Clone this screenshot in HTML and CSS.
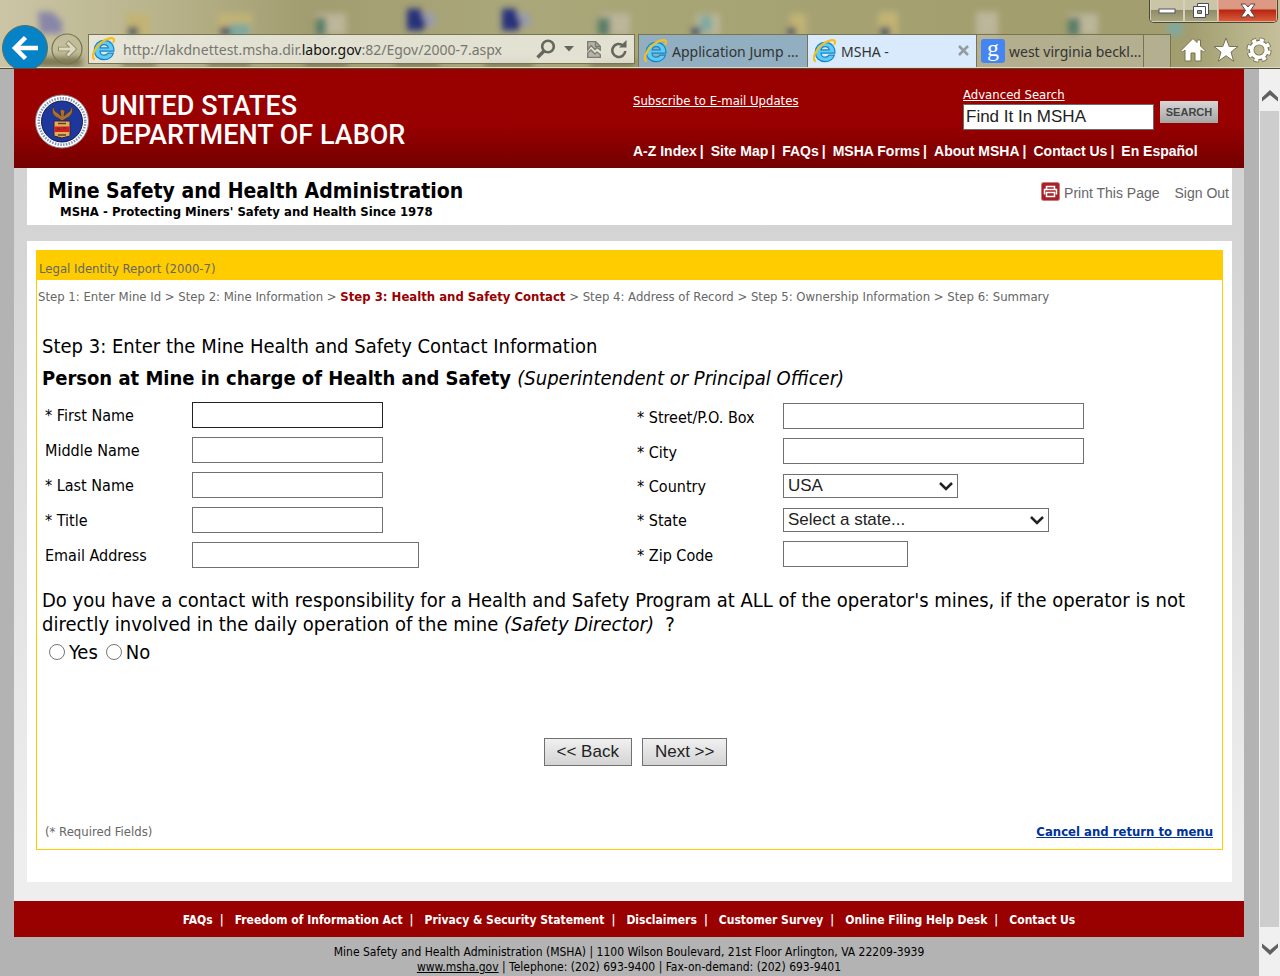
FILE: index.html
```
<!DOCTYPE html>
<html lang="en">
<head>
    <meta charset="UTF-8">
    <meta name="viewport" content="width=device-width, initial-scale=1.0">
    <title>MSHA - Legal Identity Report (2000-7)</title>
    <link rel="stylesheet" href="styles.css">
</head>
<body>
    <!-- shared icons -->
    <svg width="0" height="0" class="defs" aria-hidden="true">
        <symbol id="ie" viewBox="2 1 21 22">
            <path d="M21.500 14H8.800c.2 2.200 1.600 3.600 3.900 3.600 1.600 0 2.800-.6 3.500-1.800h4.900c-1.200 3.800-4.400 5.900-8.500 5.900-5.300 0-9-3.500-9-8.700s3.700-8.900 9-8.900c5.700 0 9.400 4 8.900 9.900zM8.900 11h7.500c-.2-1.800-1.500-3.100-3.700-3.100-2.100 0-3.500 1.200-3.800 3.100z" fill="#5cccf6" stroke="#1b83c4" stroke-width="1.100"/>
            <path d="M4 21.500C0 20 3.500 11.500 9.500 6.500 15 2 21 .8 21.700 3.300c.2 1-.2 2-.9 3" fill="none" stroke="#f7bf1a" stroke-width="2"/>
        </symbol>
    </svg>

    <div class="browser">
        <svg class="desktop" viewBox="0 0 1280 69" preserveAspectRatio="none" aria-hidden="true">
            <defs>
                <linearGradient id="glass" x1="0" x2="1">
                    <stop offset="0" stop-color="#cbc5a6"/>
                    <stop offset=".12" stop-color="#b9b48c"/>
                    <stop offset=".24" stop-color="#a29d70"/>
                    <stop offset=".4" stop-color="#aaa77a"/>
                    <stop offset=".8" stop-color="#a29e6d"/>
                    <stop offset=".93" stop-color="#a29e70"/>
                    <stop offset="1" stop-color="#c5c09b"/>
                </linearGradient>
                <filter id="soft" x="-10%" y="-50%" width="120%" height="200%"><feGaussianBlur stdDeviation="3"/></filter>
            </defs>
            <rect width="1280" height="69" fill="url(#glass)"/>
            <g filter="url(#soft)">
                <path d="M38 12h14l10 10v12H40z" fill="#8886a8"/>
                <path d="M407 9h14l6 14-4 8h-16zM502 9h14l6 14-4 8h-16z" fill="#25307c"/>
                <path d="M421 13h12l4 10-8 6zM516 13h12l4 10-8 6z" fill="#9a9cae"/>
                <path d="M126 14h24v24h-24zM218 14h34v24h-34zM790 14h16v24h-16zM878 12h20v24h-20z" fill="#c2b374"/>
                <path d="M316 14h30v22h-30zM600 14h30v22h-30zM696 14h24v22h-24zM976 12h22v26h-22zM1068 14h30v22h-30z" fill="#bcb69a"/>
                <path d="M316 18h10v18h-10zM598 18h12v18h-12zM1068 18h12v18h-12z" fill="#587d68"/>
                <path d="M700 16h12v16h-12zM230 24h20v14h-20zM1168 22h14v14h-14z" fill="#7fa99f"/>
                <path d="M128 28h10v8h-10zM220 28h10v8h-10zM880 28h10v8h-10zM692 28h8v8h-8zM788 28h8v8h-8z" fill="#344a68"/>
                <path d="M36 58h46v10H36zM122 60h34v7h-34zM208 60h42v7h-42zM305 60h42v7h-42zM395 60h44v7h-44zM485 60h48v7h-48zM590 60h45v7h-45z" fill="#77724d"/>
            </g>
        </svg>

        <div class="window-buttons">
            <button type="button" aria-label="Minimize"><svg width="18" height="6" viewBox="0 0 18 6"><rect x="1" y="1" width="16" height="4" fill="#fff" stroke="#555660"/></svg></button>
            <button type="button" aria-label="Restore"><svg width="18" height="17" viewBox="0 0 18 17"><path d="M5.500 1.500h11v11h-11z" fill="#fff" stroke="#4b4c5c"/><path d="M1.500 4.500h12v11h-12z" fill="#fff" stroke="#4b4c5c"/><path d="M5.500 8.500h4v3h-4z" fill="#a29e70" stroke="#4b4c5c"/></svg></button>
            <button type="button" class="close" aria-label="Close"><svg width="16" height="15" viewBox="0 0 16 15"><path d="M1 1h4.500L8 4l2.500-3H15l-4.500 6.500L15 14h-4.500L8 11l-2.500 3H1l4.500-6.500z" fill="#fff" stroke="#5a4550"/></svg></button>
        </div>

        <div class="toolbar">
            <button type="button" class="back" aria-label="Back"><svg width="46" height="46" viewBox="0 0 46 46"><circle cx="23" cy="23" r="22.500" fill="#0583c6" stroke="#55705f"/><path d="M36 23H14M23.500 12.500L13 23l10.500 10.500" fill="none" stroke="#fff" stroke-width="4.500"/></svg></button>
            <button type="button" class="forward" aria-label="Forward"><svg width="32" height="32" viewBox="0 0 32 32"><circle cx="16" cy="16" r="15" fill="none" stroke="#77744f" stroke-width="1.200"/><path d="M7 16h16M16 9l7 7-7 7" fill="none" stroke="#8a8763" stroke-width="4.600"/><path d="M8 16h15M16.500 9.500L23 16l-6.500 6.500" fill="none" stroke="#dedac2" stroke-width="3"/></svg></button>
            <div class="address">
                <svg width="24" height="24"><use href="#ie"/></svg>
                <span class="url">http://lakdnettest.msha.dir.<b>labor.gov</b>:82/Egov/2000-7.aspx</span>
                <svg width="20" height="20" viewBox="0 0 20 20"><circle cx="12" cy="7.500" r="5.800" fill="none" stroke="#66665c" stroke-width="2.600"/><path d="M8 12l-6.500 6.500" stroke="#66665c" stroke-width="3.400"/></svg>
                <svg class="caret" width="10" height="6" viewBox="0 0 10 6"><path d="M0 0h10L5 5.500z" fill="#66665c"/></svg>
                <svg class="broken" width="14" height="17" viewBox="0 0 14 17"><path d="M.7 9V.7h8l4.600 4.600V9L10 6.500l-2 2-4-4z" fill="#b4b4a8" stroke="#7b7b70" stroke-width="1.300"/><path d="M8.500 1v4.500H13" fill="none" stroke="#7b7b70" stroke-width="1.300"/><path d="M.7 12L4 9l4 4 2-2 3.300 2.500v2.800H.7z" fill="#b4b4a8" stroke="#7b7b70" stroke-width="1.300"/></svg>
                <svg width="18" height="19" viewBox="0 0 18 19"><path d="M13 5.500A6.500 6.500 0 1 0 15.300 11" fill="none" stroke="#66665c" stroke-width="2.600"/><path d="M9 7.500h7.500V0z" fill="#66665c"/></svg>
            </div>
            <div class="tabs">
                <div class="tab tab-blue"><svg width="24" height="24"><use href="#ie"/></svg><span>Application Jump ...</span></div>
                <div class="tab tab-active"><svg width="24" height="24"><use href="#ie"/></svg><span>MSHA -</span><button type="button" aria-label="Close tab"><svg width="11" height="11" viewBox="0 0 11 11"><path d="M1 1l9 9M10 1l-9 9" stroke="#929ba2" stroke-width="2.500"/></svg></button></div>
                <div class="tab tab-last"><span class="google">g</span><span>west virginia beckl...</span></div>
                <div class="tab-new"></div>
            </div>
            <div class="tools">
                <button type="button" aria-label="Home"><svg width="26" height="26" viewBox="0 0 26 26"><path d="M13 1.500l4 4V3h3.500v6L25 13.500l-1.500 1.500-2.500-2v11h-6v-8h-4v8H5V13l-2.500 2L1 13.500z" fill="#fff" stroke="#77744f"/></svg></button>
                <button type="button" aria-label="Favorites"><svg width="26" height="26" viewBox="0 0 26 26"><path d="M13 1l3.200 8.500H25l-7 5.600 2.700 9.200-7.700-5.600-7.700 5.600L8 15.100 1 9.500h8.800z" fill="#fff" stroke="#77744f"/></svg></button>
                <button type="button" aria-label="Tools"><svg width="26" height="26" viewBox="0 0 26 26"><g fill="none"><circle cx="13" cy="13" r="7.500" stroke="#77744f" stroke-width="5.500"/><circle cx="13" cy="13" r="10.200" stroke="#77744f" stroke-width="4.800" stroke-dasharray="5 3.010"/><circle cx="13" cy="13" r="7.300" stroke="#fff" stroke-width="3.600"/><circle cx="13" cy="13" r="10" stroke="#fff" stroke-width="3.400" stroke-dasharray="4 3.854" stroke-dashoffset="-.5"/></g></svg></button>
            </div>
        </div>
    </div>

    <div class="viewport">
        <div class="page">
            <div class="wrapper">
                <header>
                    <a href="#" class="logo">
                        <svg width="54" height="55" viewBox="0 0 54 55" aria-hidden="true">
                            <circle cx="27" cy="27.500" r="26.500" fill="#fff" stroke="#8b7d7d"/>
                            <circle cx="27" cy="27.500" r="23.200" fill="none" stroke="#8591ba" stroke-width="2.600" stroke-dasharray="1.500 1.300"/>
                            <circle cx="27" cy="27.500" r="20.500" fill="#1d379d" stroke="#101b4c"/>
                            <path d="M18 12l2 5 4 3 2 2-1-5 2-2 3 2-1 5 2-2 4-3 2-5c2 6-1 10-5 12l-5 3-4-3c-5-2-7-6-5-12z" fill="#a96f32" stroke="#352b35" stroke-width=".7"/>
                            <path d="M19 27h16v15l-8 2-8-2z" fill="#e2af57" stroke="#32213c"/>
                            <path d="M19.500 32.500h15v5.500h-15z" fill="#cf1d24"/>
                            <path d="M23 29.500h8M22 35h3M28 34h3M23 41h8" stroke="#673b28" stroke-width="1.500"/>
                        </svg>
                        <span>UNITED STATES<br>DEPARTMENT OF LABOR</span>
                    </a>
                    <div class="header-links">
                        <div class="header-top">
                            <a href="#" class="subscribe">Subscribe to E-mail Updates</a>
                            <form class="search">
                                <div>
                                    <a href="#">Advanced Search</a>
                                    <input type="text" aria-label="Search MSHA" value="Find It In MSHA">
                                </div>
                                <button type="button">SEARCH</button>
                            </form>
                        </div>
                        <nav>
                            <a href="#">A-Z Index</a><i>|</i>
                            <a href="#">Site Map</a><i>|</i>
                            <a href="#">FAQs</a><i>|</i>
                            <a href="#">MSHA Forms</a><i>|</i>
                            <a href="#">About MSHA</a><i>|</i>
                            <a href="#">Contact Us</a><i>|</i>
                            <a href="#">En Español</a>
                        </nav>
                    </div>
                </header>

                <div class="title-bar">
                    <div>
                        <h1>Mine Safety and Health Administration</h1>
                        <p>MSHA - Protecting Miners' Safety and Health Since 1978</p>
                    </div>
                    <div class="title-links">
                        <a href="#"><svg width="19" height="19" viewBox="0 0 19 19"><rect x=".5" y=".5" width="18" height="18" rx="2" fill="#a82127" stroke="#c77b7d"/><path d="M5.500 7V4.500h8V7M3.500 12.500v-5h12v5M5.500 10.500h8v4h-8z" fill="none" stroke="#fff" stroke-width="1.500"/></svg>Print This Page</a>
                        <a href="#">Sign Out</a>
                    </div>
                </div>

                <main>
                    <div class="report">
                        <h2>Legal Identity Report (2000-7)</h2>
                        <p class="steps">Step 1: Enter Mine Id &gt; Step 2: Mine Information &gt; <strong>Step 3: Health and Safety Contact</strong> &gt; Step 4: Address of Record &gt; Step 5: Ownership Information &gt; Step 6: Summary</p>

                        <form class="contact-form">
                            <h3>Step 3: Enter the Mine Health and Safety Contact Information</h3>
                            <h4>Person at Mine in charge of Health and Safety <em>(Superintendent or Principal Officer)</em></h4>

                            <div class="fields">
                                <div class="column">
                                    <div class="field"><label for="firstName">* First Name</label><input type="text" id="firstName" class="current"></div>
                                    <div class="field"><label for="middleName">Middle Name</label><input type="text" id="middleName"></div>
                                    <div class="field"><label for="lastName">* Last Name</label><input type="text" id="lastName"></div>
                                    <div class="field"><label for="jobTitle">* Title</label><input type="text" id="jobTitle"></div>
                                    <div class="field"><label for="email">Email Address</label><input type="text" id="email" class="email"></div>
                                </div>
                                <div class="column column-right">
                                    <div class="field"><label for="street">* Street/P.O. Box</label><input type="text" id="street" class="wide"></div>
                                    <div class="field"><label for="city">* City</label><input type="text" id="city" class="wide"></div>
                                    <div class="field"><label for="country">* Country</label><select id="country"><option>USA</option></select></div>
                                    <div class="field"><label for="state">* State</label><select id="state" class="state"><option>Select a state...</option></select></div>
                                    <div class="field"><label for="zip">* Zip Code</label><input type="text" id="zip" class="zip"></div>
                                </div>
                            </div>

                            <p class="question" id="question">Do you have a contact with responsibility for a Health and Safety Program at ALL of the operator's mines, if the operator is not directly involved in the daily operation of the mine <em>(Safety Director)</em> &nbsp;?</p>
                            <div class="answers" role="radiogroup" aria-labelledby="question">
                                <input type="radio" name="director" id="yes"><label for="yes">Yes</label>
                                <input type="radio" name="director" id="no"><label for="no">No</label>
                            </div>

                            <div class="buttons">
                                <button type="button">&lt;&lt; Back</button>
                                <button type="button">Next &gt;&gt;</button>
                            </div>
                        </form>

                        <div class="report-bottom">
                            <span>(* Required Fields)</span>
                            <a href="#">Cancel and return to menu</a>
                        </div>
                    </div>
                </main>

                <footer>
                    <a href="#">FAQs</a><i>|</i>
                    <a href="#">Freedom of Information Act</a><i>|</i>
                    <a href="#">Privacy &amp; Security Statement</a><i>|</i>
                    <a href="#">Disclaimers</a><i>|</i>
                    <a href="#">Customer Survey</a><i>|</i>
                    <a href="#">Online Filing Help Desk</a><i>|</i>
                    <a href="#">Contact Us</a>
                </footer>
            </div>
            <p class="address-line">Mine Safety and Health Administration (MSHA) | 1100 Wilson Boulevard, 21st Floor Arlington, VA 22209-3939<br><a href="#">www.msha.gov</a> | Telephone: (202) 693-9400 | Fax-on-demand: (202) 693-9401</p>
        </div>
        <div class="scrollbar" aria-hidden="true">
            <svg width="16" height="12" viewBox="0 0 16 12"><path d="M0 11.500V7.500L8 0l8 7.500v4L8 5z" fill="#606060"/></svg>
            <div class="thumb"></div>
            <svg width="16" height="12" viewBox="0 0 16 12"><path d="M0 .5v4L8 12l8-7.500v-4L8 7z" fill="#606060"/></svg>
        </div>
    </div>
</body>
</html>
```
FILE: styles.css
```
* {
    box-sizing: border-box;
}
body {
    display: flex;
    flex-direction: column;
    min-height: 100vh;
    margin: 0;
    background-color: #b3b3b3;
    color: #000;
    font-family: Tahoma, "DejaVu Sans Condensed", "Noto Sans", sans-serif;
    font-size: 13px;
}
h1, h2, h3, h4, p {
    margin: 0;
}
button {
    padding: 0;
    border: none;
    background: none;
    cursor: pointer;
}
.defs {
    position: absolute;
}

/* browser frame */
.browser {
    position: relative;
    height: 69px;
    overflow: hidden;
    border-bottom: 1px solid #4f4d38;
    font-family: "Segoe UI", "Noto Sans", sans-serif;
    font-size: 14px;
}
.desktop {
    position: absolute;
    width: 100%;
    height: 100%;
}
.window-buttons {
    position: absolute;
    top: 0;
    right: 2px;
    display: flex;
    height: 23px;
    border: 1px solid #4b4936;
    border-top: none;
    border-radius: 0 0 5px 5px;
    box-shadow: inset 0 0 0 1px #dedbc4;
    overflow: hidden;
}
.window-buttons button {
    display: flex;
    align-items: center;
    justify-content: center;
    width: 34px;
    border: 1px solid #d5d1b8;
    border-width: 0 1px 1px;
    background: linear-gradient(#c9c5a6 45%, #8f8b67 50%, #aaa780);
}
.window-buttons .close {
    width: 59px;
    border-color: #e8a893;
    background: linear-gradient(#dc9a85 40%, #b92711 50%, #d75c3c);
}
.toolbar {
    position: relative;
    display: flex;
    height: 68px;
    padding-top: 34px;
    border-bottom: 1px solid #dedbc4;
}
.back {
    align-self: flex-start;
    height: 46px;
    margin: -9px 3px 0 2px;
}
.forward {
    height: 32px;
    margin: -1px 5px 0 0;
}
.address {
    display: flex;
    flex: 1;
    align-items: center;
    height: 30px;
    margin-right: 3px;
    padding: 0 6px 0 3px;
    border: 1px solid #77744f;
    background-color: rgba(240, 240, 232, 0.8);
}
.address svg, .tab svg {
    flex: none;
}
.url {
    flex: 1;
    margin-left: 7px;
    color: #77776e;
    white-space: nowrap;
}
.url b {
    color: #111;
    font-weight: normal;
}
.address .caret {
    margin: 0 13px 0 8px;
}
.address .broken {
    margin-right: 9px;
}
.tabs {
    display: flex;
    color: #333;
}
.tab {
    display: flex;
    align-items: center;
    gap: 4px;
    width: 169px;
    padding-left: 5px;
    border: 1px solid #77744f;
    border-width: 1px 0 0 1px;
    white-space: nowrap;
}
.tab button {
    margin: 0 7px 0 auto;
}
.tab-blue {
    background-color: #91afc0;
}
.tab-active {
    background-color: #d8eafb;
}
.tab-last, .tab-new {
    background-color: rgba(190, 187, 165, 0.6);
}
.tab-last {
    width: 167px;
    padding-left: 4px;
}
.google {
    flex: none;
    width: 24px;
    height: 24px;
    border-radius: 3px;
    background-color: #4484f3;
    color: #fff;
    font: 24px/18px "Liberation Serif", serif;
    text-align: center;
}
.tab-new {
    width: 28px;
    border: 1px solid #77744f;
    border-bottom: none;
}
.tools {
    display: flex;
    gap: 7px;
    padding: 2px 8px 0 9px;
}

/* page */
.viewport {
    display: flex;
    flex: 1;
}
.page {
    flex: 1;
    padding: 0 15px 0 14px;
}
.wrapper {
    background: linear-gradient(#d3d3d3 100px, #d5d5d5 200px, #eeeeee 780px);
}
header {
    display: flex;
    justify-content: space-between;
    height: 99px;
    padding-left: 21px;
    background: linear-gradient(#990000 55%, #740000);
    color: #fff;
}
header a, footer a {
    color: #fff;
}
.logo {
    display: flex;
    gap: 12px;
    padding-top: 25px;
    font-family: Roboto, sans-serif;
    font-size: 27px;
    font-weight: 500;
    line-height: 29px;
    text-decoration: none;
    white-space: nowrap;
}
.logo span {
    margin-top: -2px;
}
.header-links {
    width: 611px;
}
.header-top {
    display: flex;
    justify-content: space-between;
    height: 72px;
    padding: 18px 26px 0 0;
}
.subscribe {
    margin-top: 6px;
}
.search {
    display: flex;
    gap: 6px;
}
.search div {
    display: flex;
    flex-direction: column;
    align-items: flex-start;
    gap: 2px;
}
.search input {
    width: 191px;
    height: 26px;
    padding: 0 2px;
    border: 1px solid #6b6b6b;
    color: #222;
    font: 17px "Liberation Sans", Arial, sans-serif;
}
.search button {
    width: 58px;
    height: 22px;
    margin-top: 14px;
    background: linear-gradient(#d6d6d6, #a5a5a5);
    color: #444;
    font: bold 11px "Liberation Sans", Arial, sans-serif;
}
nav {
    display: flex;
    font: bold 14px/20px "Liberation Sans", Arial, sans-serif;
    white-space: nowrap;
}
nav a, footer a {
    text-decoration: none;
}
nav i {
    margin: 0 7px 0 3px;
    font-style: normal;
}
.title-bar {
    display: flex;
    justify-content: space-between;
    height: 57px;
    margin: 0 12px 16px 13px;
    padding: 10px 3px 0 21px;
    background-color: #fff;
}
.title-bar h1 {
    font-size: 21px;
    line-height: 26px;
}
.title-bar p {
    padding-left: 12px;
    font-weight: bold;
    line-height: 16px;
}
.title-links {
    display: flex;
    align-items: flex-start;
    gap: 15px;
    padding-top: 4px;
    font: 14px/22px "Liberation Sans", Arial, sans-serif;
}
.title-links a {
    display: flex;
    gap: 4px;
    color: #666;
    text-decoration: none;
}
main {
    margin: 0 12px 0 13px;
    padding: 9px 9px 32px;
    background-color: #fff;
}
.report {
    border: 1px solid #ffcc00;
}
.report h2 {
    height: 29px;
    padding: 10px 2px 0;
    background-color: #ffcc00;
    color: #666;
    font-size: 13px;
    font-weight: normal;
    line-height: 16px;
}
.steps {
    padding: 9px 0 0 1px;
    color: #666;
    line-height: 16px;
}
.steps strong {
    color: #990000;
}
.contact-form {
    padding: 29px 5px 0;
}
.contact-form h3, .contact-form h4 {
    font-size: 20px;
    line-height: 24px;
}
.contact-form h3, .contact-form em {
    font-weight: normal;
}
.contact-form h4 {
    margin-top: 8px;
}
.fields {
    display: flex;
    margin-top: 12px;
    padding-left: 3px;
}
.column {
    display: flex;
    flex: 0 0 50%;
    flex-direction: column;
    gap: 9px;
}
.column-right {
    padding: 1px 0 0 6px;
}
.field {
    display: flex;
    align-items: center;
}
.field label {
    width: 147px;
    font-size: 16px;
}
.column-right label {
    width: 146px;
    padding-top: 2px;
}
.field input, .field select {
    width: 191px;
    height: 26px;
    border: 1px solid #707070;
    border-radius: 0;
    background-color: #fff;
    font: 17px "Liberation Sans", Arial, sans-serif;
}
.field .current {
    border-color: #222;
}
.field .email {
    width: 227px;
}
.field .wide {
    width: 301px;
}
.field .zip {
    width: 125px;
}
.field select {
    width: 175px;
    height: 24px;
    margin-top: 1px;
    padding: 0 4px 2px;
    appearance: none;
    background: url("data:image/svg+xml,%3Csvg xmlns='http://www.w3.org/2000/svg' width='14' height='9'%3E%3Cpath d='M1 1l6 6 6-6' fill='none' stroke='%23222' stroke-width='2.5'/%3E%3C/svg%3E") no-repeat right 4px center #fff;
    color: #222;
}
.field .state {
    width: 266px;
}
.question {
    margin-top: 20px;
    font-size: 20px;
    line-height: 24px;
}
.answers {
    display: flex;
    align-items: center;
    margin-top: 4px;
    padding-left: 7px;
    font-size: 20px;
    line-height: 24px;
}
.answers input {
    width: 16px;
    height: 16px;
    margin: 0 4px 0 0;
}
.answers label {
    margin-right: 8px;
}
.buttons {
    display: flex;
    justify-content: center;
    gap: 10px;
    margin-top: 74px;
    padding-left: 12px;
}
.buttons button {
    height: 28px;
    padding: 0 12px;
    border: 1px solid #707070;
    background: linear-gradient(#f0f0f0, #d4d4d4);
    color: #222;
    font: 17px "Liberation Sans", Arial, sans-serif;
}
.report-bottom {
    display: flex;
    justify-content: space-between;
    padding: 58px 9px 9px 8px;
    color: #666;
    line-height: 16px;
}
.report-bottom a {
    color: #003399;
    font-weight: bold;
}
footer {
    display: flex;
    justify-content: center;
    margin-top: 19px;
    padding: 11px 0 9px;
    background-color: #990000;
    color: #fff;
    font-size: 12px;
    font-weight: bold;
    line-height: 16px;
}
footer i {
    margin: 0 11px 0 7px;
    font-style: normal;
}
.address-line {
    padding-top: 8px;
    font-size: 12px;
    line-height: 15px;
    text-align: center;
}
.address-line a {
    color: #000;
}
.scrollbar {
    display: flex;
    flex-direction: column;
    align-items: center;
    width: 21px;
    padding: 21px 0;
    background-color: #f0f0f0;
}
.thumb {
    flex: 1;
    width: 19px;
    margin: 9px 0 16px;
    background-color: #cdcdcd;
}
```
